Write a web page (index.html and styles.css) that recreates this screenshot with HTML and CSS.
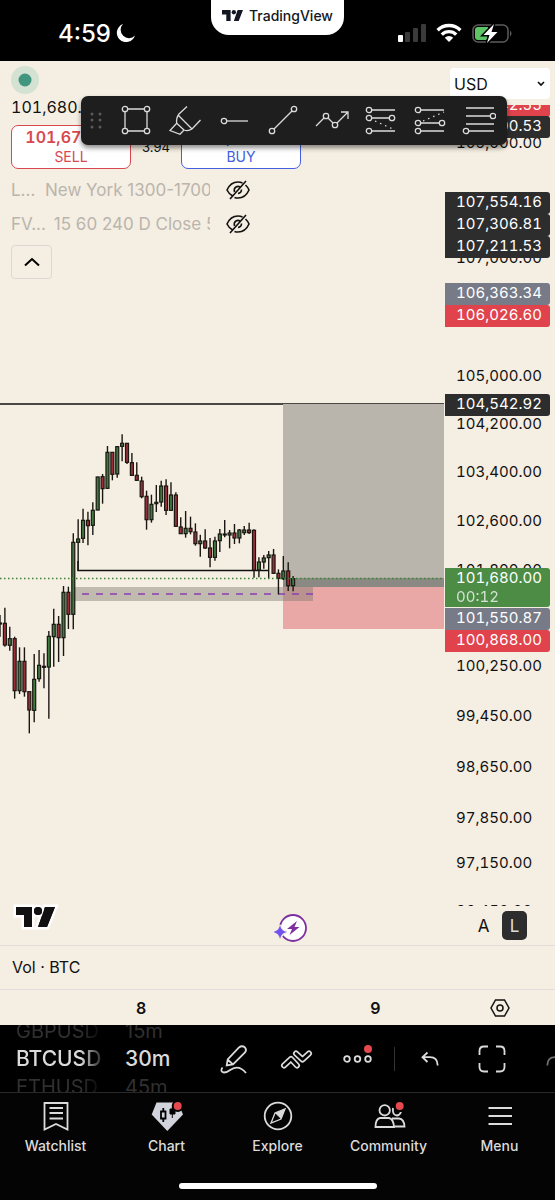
FILE: index.html
```html
<!DOCTYPE html>
<html lang="en">
  <head>
    <meta charset="UTF-8" />
    <meta name="viewport" content="width=device-width, initial-scale=1.0" />
    <title>BTCUSD - TradingView</title>
    <link rel="stylesheet" href="styles.css" />
  </head>
  <body>
    <header class="status">
      <div class="status-left">
        <span class="clock">4:59</span>
        <svg class="moon" width="20" height="20" viewBox="0 0 20 20"><path d="M7 1A9.3 9.3 0 1 0 19 12.6A8 8 0 0 1 7 1z" fill="#fff" /></svg>
      </div>
      <div class="notch">
        <svg width="21" height="11" viewBox="0 0 39 20"><path d="M0 0H16V20H8V8H0zM29 0H39L31 20H22z" fill="#131722" /><circle cx="22" cy="4" r="4" fill="#131722" /></svg>
        <span>TradingView</span>
      </div>
      <div class="status-right">
        <svg width="30" height="20" viewBox="0 0 30 20">
          <rect x="1" y="12" width="5" height="7" rx="1" fill="#fff" />
          <rect x="8" y="9" width="5" height="10" rx="1" fill="#3a3a3a" />
          <rect x="16" y="5" width="5" height="14" rx="1" fill="#3a3a3a" />
          <rect x="24" y="1" width="5" height="18" rx="1" fill="#3a3a3a" />
        </svg>
        <svg width="26" height="20" viewBox="0 0 26 20" fill="none" stroke="#fff" stroke-width="3.4">
          <path d="M1.6 7.2A16.2 16.2 0 0 1 24.4 7.2M5.8 11.6A10.2 10.2 0 0 1 20.2 11.6" />
          <path d="M13 19L8.8 14.8A6 6 0 0 1 17.2 14.8z" fill="#fff" stroke="none" />
        </svg>
        <svg width="42" height="22" viewBox="0 0 42 22">
          <rect x="2" y="3" width="35" height="17" rx="5" fill="none" stroke="#5c5c5c" stroke-width="1.5" />
          <path d="M39 8.5Q42 11.5 39 14.5z" fill="#5c5c5c" />
          <path d="M7 5H17V18H7Q4 18 4 15V8Q4 5 7 5z" fill="#5fc466" />
          <path d="M23 2L12.5 13H18.5L16 21L26.5 10H20.5z" fill="#fff" stroke="#000" stroke-width="3" paint-order="stroke" />
        </svg>
      </div>
    </header>

    <main class="chart">
      <section class="pane">
        <svg class="plot" id="plot" width="100%" height="100%">
          <line class="level" x1="0" y1="343" x2="100%" y2="343" />
          <rect x="283" y="343" width="100%" height="183" fill="#b9b5ac" />
          <rect x="283" y="517" width="100%" height="9" fill="#8b8983" />
          <rect x="283" y="526" width="100%" height="42" fill="#e9a8a6" />
          <rect x="74" y="526" width="239" height="14" fill="#807d74" fill-opacity="0.46" />
          <line x1="82" y1="533" x2="313" y2="533" stroke="#8a3fae" stroke-width="1.5" stroke-dasharray="7 7" />
          <path class="level" d="M78 500V509.5H268" fill="none" />
          <g id="candles"></g>
          <line x1="0" y1="517.5" x2="100%" y2="517.5" stroke="#3f8038" stroke-width="1.3" stroke-dasharray="1.5 2.5" />
        </svg>

        <div class="legend">
          <svg class="live" width="28" height="28" viewBox="0 0 28 28"><circle cx="14" cy="14" r="14" fill="#d3e2d2" /><circle cx="14" cy="14" r="6.5" fill="#42957f" /></svg>
          <div class="last">101,680.00</div>
          <div class="trade">
            <button type="button" class="order sell"><b>101,678.03</b><span>SELL</span></button>
            <span class="spread">3.94</span>
            <button type="button" class="order buy"><b>101,681.97</b><span>BUY</span></button>
          </div>
          <div class="study">
            <span class="study-name">L...</span>
            <span class="study-args">New York 1300-1700</span>
            <svg width="24" height="20" viewBox="0 0 24 20" fill="none" stroke="#111" stroke-width="1.6"><path d="M7 16.3Q3 14.2 1 10Q4.5 2 12 2Q14.5 2 16.5 3M19.5 5Q22 7.3 23 10Q19.5 18 12 18Q10 18 8.5 17.4M8.5 12Q7.5 8.5 10 7Q12 5.8 14 7M15.5 9.5Q15.5 13 12 13.5M20 1L4 19" /></svg>
          </div>
          <div class="study">
            <span class="study-name">FV...</span>
            <span class="study-args">15 60 240 D Close 5</span>
            <svg width="24" height="20" viewBox="0 0 24 20" fill="none" stroke="#111" stroke-width="1.6"><path d="M7 16.3Q3 14.2 1 10Q4.5 2 12 2Q14.5 2 16.5 3M19.5 5Q22 7.3 23 10Q19.5 18 12 18Q10 18 8.5 17.4M8.5 12Q7.5 8.5 10 7Q12 5.8 14 7M15.5 9.5Q15.5 13 12 13.5M20 1L4 19" /></svg>
          </div>
          <button type="button" class="collapse" aria-label="Collapse legend">
            <svg width="16" height="10" viewBox="0 0 16 10" fill="none" stroke="#000" stroke-width="2"><path d="M1 8.5L8 2L15 8.5" /></svg>
          </button>
        </div>

        <svg class="watermark" width="47" height="28" viewBox="-4 -4 47 28">
          <g fill="#111" stroke="#fff" stroke-width="5" paint-order="stroke"><path d="M0 0H16V20H8V8H0zM29 0H39L31 20H22z" /><circle cx="22" cy="4" r="4" /></g>
          <path d="M0 0H16V20H8V8H0zM29 0H39L31 20H22z" fill="#111" /><circle cx="22" cy="4" r="4" fill="#111" />
        </svg>
        <svg class="event" width="34" height="30" viewBox="0 0 34 30">
          <circle cx="19" cy="15" r="13" fill="#fff" stroke="#7d2f9f" stroke-width="1.8" />
          <path d="M23 8L13 16H18L15.5 22L25.5 14H20.5z" fill="#7d2f9f" />
          <path d="M6 12Q7 18 13 19Q7 20 6 26Q5 20 -1 19Q5 18 6 12z" fill="#6f52ef" stroke="#f5eee2" stroke-width="3" paint-order="stroke" />
        </svg>
      </section>

      <aside class="axis">
        <select class="currency" aria-label="Currency">
          <option>USD</option>
        </select>
        <div class="scale" id="scale"></div>
        <div class="modes">
          <button type="button" class="mode">A</button>
          <button type="button" class="mode mode-on">L</button>
        </div>
      </aside>

      <div class="drawbar">
        <svg class="grip" width="30" height="34" viewBox="0 0 30 34" fill="#5a5a5a">
          <circle cx="11" cy="10" r="1.5" /><circle cx="19" cy="10" r="1.5" />
          <circle cx="11" cy="16" r="1.5" /><circle cx="19" cy="16" r="1.5" />
          <circle cx="11" cy="23" r="1.5" /><circle cx="19" cy="23" r="1.5" />
        </svg>
        <button type="button" aria-label="Rectangle"><svg class="tool" viewBox="0 0 34 34"><path d="M9 5H25M9 27H25M6 8V24M28 8V24" /><circle cx="6" cy="5" r="2.7" /><circle cx="28" cy="5" r="2.7" /><circle cx="6" cy="27" r="2.7" /><circle cx="28" cy="27" r="2.7" /></svg></button>
        <button type="button" aria-label="Highlighter"><svg class="tool" viewBox="0 0 34 34"><path d="M19 2.5L11 10Q8 14 8.7 19.3L2 26.5L12 30.3L16 26Q20 27.5 24 25L32.5 16M10 11L24 25M8.7 19.3L16 26" /></svg></button>
        <button type="button" aria-label="Horizontal ray"><svg class="tool" viewBox="0 0 34 34"><path d="M10 17H31" /><circle cx="7" cy="17" r="2.7" /></svg></button>
        <button type="button" aria-label="Trend line"><svg class="tool" viewBox="0 0 34 34"><path d="M8 25L26 7" /><circle cx="6" cy="27" r="2.7" /><circle cx="28" cy="5" r="2.7" /></svg></button>
        <button type="button" aria-label="Path"><svg class="tool" viewBox="0 0 34 34"><path d="M1 22L9 14M13 14L18 19M22 19L33 8M26 8H33V15" /><circle cx="11" cy="12" r="2.7" /><circle cx="20" cy="21" r="2.7" /></svg></button>
        <button type="button" aria-label="Long position"><svg class="tool" viewBox="0 0 34 34"><path d="M8 6H31M8 14H25M8 27H31" /><path d="M11 17L31 26" stroke-dasharray="1.5 4" /><circle cx="5" cy="6" r="2.7" /><circle cx="5" cy="14" r="2.7" /><circle cx="28" cy="14" r="2.7" /><circle cx="5" cy="27" r="2.7" /></svg></button>
        <button type="button" aria-label="Short position"><svg class="tool" viewBox="0 0 34 34"><path d="M8 6H31M8 19H26M8 27H31" /><path d="M10 17L31 8" stroke-dasharray="1.5 4" /><circle cx="5" cy="6" r="2.7" /><circle cx="5" cy="19" r="2.7" /><circle cx="29" cy="19" r="2.7" /><circle cx="5" cy="27" r="2.7" /></svg></button>
        <button type="button" aria-label="Fib retracement"><svg class="tool" viewBox="0 0 34 34"><path d="M4 4H32M4 12H28M4 20H32M7 27H32" /><circle cx="31" cy="12" r="2.7" /><circle cx="4" cy="27" r="2.7" /></svg></button>
      </div>
    </main>

    <div class="volume">Vol · BTC</div>
    <div class="dates">
      <div class="days"><span>8</span><span>9</span></div>
      <button type="button" class="settings" aria-label="Chart settings">
        <svg width="20" height="20" viewBox="0 0 20 20" fill="none" stroke="#111" stroke-width="1.5"><path d="M5.5 2H14.5L19 10L14.5 18H5.5L1 10z" /><circle cx="10" cy="10" r="3" /></svg>
      </button>
    </div>

    <div class="toolbar">
      <div class="wheels">
        <div class="wheel symbol"><span>GBPUSD</span><strong>BTCUSD</strong><span>ETHUSD</span></div>
        <div class="wheel"><span>15m</span><strong>30m</strong><span>45m</span></div>
      </div>
      <button type="button" aria-label="Draw"><svg class="icon" viewBox="0 0 34 34"><path d="M9.7 23.3L10.7 17.3L22 5.5Q25 3 28 5.5Q30 8 28 10.5L16 22.3zM10.5 17.5L16 22.5M5.5 25.5Q2.5 29.5 7 30.5Q10 30.5 14 27.5Q22 22.5 29 31" /></svg></button>
      <button type="button" aria-label="Indicators"><svg class="icon zigzag" viewBox="0 0 34 34"><path d="M5 23.5L12 17L18 23.5M17 11.5L23.5 17.5L30 11.5" stroke="#dbdbdb" stroke-width="6" /><path d="M5 23.5L12 17L18 23.5M17 11.5L23.5 17.5L30 11.5" stroke="#000" stroke-width="2.6" /></svg></button>
      <button type="button" aria-label="More"><svg class="icon" viewBox="0 0 34 34"><circle cx="6" cy="17" r="2.8" /><circle cx="16.5" cy="17" r="2.8" /><circle cx="27" cy="17" r="2.8" /><circle class="dot" cx="27" cy="7" r="4" /></svg></button>
      <span class="divider"></span>
      <button type="button" aria-label="Undo"><svg class="icon" viewBox="0 0 34 34"><path d="M14.5 10.5L9.5 15.2L14.5 20M9.5 15.2H17Q24.5 15.2 24.7 23.5" /></svg></button>
      <button type="button" aria-label="Fullscreen"><svg class="icon" viewBox="0 0 34 34"><path d="M4.5 13V9Q4.5 4.5 9 4.5H13M21 4.5H25Q29.500 4.500 29.500 9V13M29.500 21V25Q29.500 29.500 25 29.500H21M13 29.500H9Q4.500 29.500 4.500 25V21" /></svg></button>
      <button type="button" class="faded" aria-label="Redo"><svg class="icon" viewBox="0 0 34 34"><path d="M19.5 10.5L24.5 15.2L19.5 20M24.5 15.2H18Q10.5 15.2 10.3 23.5" /></svg></button>
    </div>

    <nav class="tabs">
      <a href="#watchlist">
        <svg class="icon" viewBox="0 0 34 34"><path d="M5.5 4H28.5V30.5L17 25L5.5 30.5zM10.5 9H24M10.5 14H24M10.5 19.5H24" /></svg>
        Watchlist
      </a>
      <a href="#chart">
        <svg class="icon" viewBox="0 0 34 34"><path d="M6.5 3.5H28L33 15.5L17.3 32L1.7 15.5z" fill="#d1d4dc" stroke="none" /><path d="M13.3 9V12M13.3 20V23M11 12.5H15.5V19.5H11z" stroke="#000" /><path d="M22.3 8V19M20 10H25V15H20z" fill="#000" stroke="#000" stroke-width="1" /><circle class="dot ring" cx="27.7" cy="7" r="5" /></svg>
        Chart
      </a>
      <a href="#explore">
        <svg class="icon" viewBox="0 0 34 34"><circle cx="17" cy="17" r="13.3" /><path d="M24 10L20 20L10 24L14 14z" stroke-width="1.3" /><path d="M24 10L20 20L14 14z" fill="#dbdbdb" stroke="none" /></svg>
        Explore
      </a>
      <a href="#community">
        <svg class="icon" viewBox="0 0 34 34"><circle cx="12.7" cy="11.3" r="5.2" /><path d="M8 19H17Q21.5 20 22 28H3.5Q3.5 20 8 19zM21 9Q20 16 25 16.5Q28 16 29 13M20 19.5H27Q32 20 32.5 27.5H22" /><circle class="dot ring" cx="27.7" cy="7" r="5" /></svg>
        Community
      </a>
      <a href="#menu">
        <svg class="icon" viewBox="0 0 34 34"><path d="M5.5 9H29M5.5 17H29M5.5 25H29" /></svg>
        Menu
      </a>
    </nav>
    <div class="home"><span></span></div>

    <script src="script.js"></script>
  </body>
</html>
```

FILE: styles.css
```css
* {
  box-sizing: border-box;
}
body {
  margin: 0;
  min-height: 100vh;
  display: flex;
  flex-direction: column;
  overflow-x: hidden;
  background: #000;
  color: #111;
  font-family: "Inter", "Liberation Sans", sans-serif;
  font-size: 16px;
}
button {
  padding: 0;
  border: none;
  background: none;
  color: inherit;
  font: inherit;
  cursor: pointer;
}
svg {
  display: block;
  flex: none;
}

/* status bar */
.status {
  display: grid;
  grid-template-columns: 1fr auto 1fr;
  height: 61px;
  color: #fff;
}
.status-left,
.status-right {
  display: flex;
  align-items: center;
  padding-top: 5px;
}
.status-left {
  gap: 5px;
  padding-left: 58px;
}
.status-right {
  justify-content: flex-end;
  gap: 9px;
  padding-right: 42px;
}
.clock {
  font-size: 24px;
  font-weight: 500;
}
.notch {
  display: flex;
  align-items: center;
  justify-content: center;
  gap: 6px;
  width: 133px;
  height: 35px;
  padding-bottom: 4px;
  background: #fff;
  border-radius: 0 0 18px 18px;
  color: #131722;
  font-size: 14px;
  font-weight: 500;
}

/* chart */
.chart {
  position: relative;
  flex: 1;
  display: flex;
  min-height: 884px;
  background: #f5eee2;
}
.pane {
  position: relative;
  flex: 1;
  min-width: 0;
  overflow: hidden;
}
.plot {
  position: absolute;
  top: 0;
  left: 0;
}
.level {
  stroke: #111;
  stroke-width: 1.5;
}
.legend {
  position: absolute;
  top: 5px;
  left: 11px;
}
.last {
  margin-top: 3px;
  font-variant-numeric: tabular-nums;
  line-height: 20px;
}
.trade {
  display: flex;
  align-items: center;
  margin-top: 8px;
}
.order {
  display: flex;
  flex-direction: column;
  align-items: center;
  justify-content: center;
  width: 120px;
  height: 44px;
  background: #fff;
  border: 1px solid;
  border-radius: 7px;
  line-height: 19px;
}
.order b {
  font-variant-numeric: tabular-nums;
  font-weight: 600;
}
.order span {
  font-size: 14px;
}
.sell {
  color: #d9484f;
}
.buy {
  color: #4460e0;
}
.spread {
  width: 50px;
  font-size: 13px;
  text-align: center;
}
.study {
  display: flex;
  align-items: center;
  gap: 8px;
  width: 239px;
  height: 34px;
  color: #bab5ad;
  font-size: 17px;
}
.trade + .study {
  margin-top: 4px;
}
.study-name {
  min-width: 26px;
}
.study-args {
  flex: 1;
  min-width: 0;
  overflow: hidden;
  white-space: nowrap;
}
.study svg {
  margin-left: 8px;
}
.collapse {
  display: flex;
  align-items: center;
  justify-content: center;
  width: 41px;
  height: 34px;
  margin-top: 4px;
  border: 1px solid #dcd8d6;
  border-radius: 4px;
}
.watermark {
  position: absolute;
  bottom: 14px;
  left: 12px;
}
.event {
  position: absolute;
  bottom: 2px;
  left: 274px;
}

/* price axis */
.axis {
  display: flex;
  flex-direction: column;
  width: 111px;
  padding: 7px 5px 5px 1px;
}
.currency {
  height: 31px;
  margin-left: 5px;
  padding: 0 4px;
  appearance: none;
  background: #fff url("data:image/svg+xml,%3Csvg xmlns='http://www.w3.org/2000/svg' width='8' height='6' fill='none' stroke='%23111' stroke-width='1.7'%3E%3Cpath d='M1 1l3 3 3-3'/%3E%3C/svg%3E") right 5px center no-repeat;
  border: none;
  border-radius: 4px;
  color: #111;
  font: inherit;
}
.scale {
  position: relative;
  flex: 1;
  margin-top: 6px;
  overflow: hidden;
  font-size: 15px;
  font-variant-numeric: tabular-nums;
}
.price {
  position: absolute;
  left: 0;
  right: 0;
  padding: 0 0 2px 11px;
  line-height: 20px;
}
.tag {
  border-radius: 0 3px 3px 0;
  color: #fff;
}
.tag small {
  display: block;
  font-size: 15px;
  line-height: 17px;
  opacity: 0.75;
}
.dark {
  background: #2d2d2d;
}
.grey {
  background: #777a87;
}
.red {
  background: #e0434b;
}
.green {
  background: #4c8c45;
}
.modes {
  display: flex;
  gap: 6px;
  padding: 5px 0 0 26px;
}
.mode {
  width: 25px;
  height: 29px;
  border-radius: 5px;
  font-size: 17px;
}
.mode-on {
  background: #2d2d2d;
  color: #ddd;
}

/* floating drawing tools */
.drawbar {
  position: absolute;
  top: 35px;
  left: 81px;
  display: flex;
  align-items: center;
  height: 49px;
  padding-right: 4px;
  background: #1e1e1e;
  border-radius: 7px;
  box-shadow: 0 3px 5px rgba(0, 0, 0, 0.45);
}
.drawbar button {
  display: flex;
  justify-content: center;
  width: 49px;
}
.tool {
  width: 34px;
  height: 34px;
  fill: none;
  stroke: #dbdbdb;
  stroke-width: 1.3;
}

.volume {
  padding: 0 12px;
  background: #f5eee2;
  border-top: 1px solid #e2dcdc;
  line-height: 43px;
}
.dates {
  display: flex;
  align-items: center;
  height: 36px;
  background: #f5eee2;
  border-top: 1px solid #e2dcdc;
}
.days {
  flex: 1;
  display: flex;
  gap: 224px;
  padding-left: 136px;
  font-weight: 600;
}
.settings {
  display: flex;
  justify-content: center;
  width: 111px;
}

/* bottom toolbar */
.toolbar {
  display: flex;
  align-items: center;
  height: 68px;
  overflow: hidden;
  border-bottom: 1px solid #292929;
  color: #dbdbdb;
}
.toolbar button {
  flex: none;
  display: flex;
  justify-content: center;
  width: 62px;
}
.wheels {
  flex: none;
  display: flex;
  gap: 23px;
  width: 203px;
  padding-left: 16px;
}
.wheel {
  display: flex;
  flex-direction: column;
}
.wheel span {
  color: #303030;
  font-size: 20px;
  line-height: 28px;
}
.wheel strong {
  font-size: 21px;
  font-weight: 500;
  line-height: 28px;
}
.symbol {
  width: 86px;
  overflow: hidden;
  mask-image: linear-gradient(to right, #000 75%, transparent 105%);
}
.divider {
  flex: none;
  width: 10px;
  height: 24px;
  background: linear-gradient(#333, #333) center / 1px 100% no-repeat;
}
.icon {
  width: 34px;
  height: 34px;
  fill: none;
  stroke: #dbdbdb;
  stroke-width: 1.8;
}
.zigzag {
  stroke-linecap: round;
  stroke-linejoin: round;
}
.dot {
  fill: #e5484d;
  stroke: none;
}
.ring {
  stroke: #000;
  stroke-width: 2;
}
.faded {
  opacity: 0.5;
}

/* tab bar */
.tabs {
  display: flex;
  height: 71px;
  padding-top: 6px;
  background: #040404;
}
.tabs a {
  flex: 1;
  display: flex;
  flex-direction: column;
  align-items: center;
  gap: 3px;
  color: #dbdbdb;
  font-size: 14px;
  font-weight: 500;
  line-height: 20px;
  text-decoration: none;
}
.home {
  display: flex;
  justify-content: center;
  height: 36px;
  padding-top: 19px;
  background: #040404;
}
.home span {
  width: 198px;
  height: 6px;
  background: #fff;
  border-radius: 3px;
}
```

FILE: script.js
```js
const SVG = "http://www.w3.org/2000/svg";
const STEP = 4.885;
const TOP = 359;

// high, body top, body bottom, low (thirds of a pixel below TOP), up = 1
const candles = [
  [585, 609, 612, 650, 0], [563, 610, 675, 680, 0], [620, 656, 676, 692, 1],
  [650, 656, 812, 836, 0], [682, 724, 812, 822, 1], [682, 724, 815, 830, 0],
  [815, 815, 870, 940, 0], [702, 778, 871, 907, 1], [690, 736, 776, 785, 1],
  [700, 739, 742, 805, 0], [633, 649, 741, 896, 1], [566, 613, 650, 740, 1],
  [588, 613, 653, 726, 0], [498, 517, 653, 708, 1], [500, 517, 583, 627, 0],
  [340, 367, 583, 628, 1], [298, 357, 367, 452, 1], [266, 301, 355, 369, 1],
  [275, 301, 317, 376, 0], [247, 271, 316, 345, 1], [170, 171, 270, 271, 1],
  [162, 170, 206, 251, 0], [78, 97, 205, 207, 1], [97, 97, 163, 181, 0],
  [78, 80, 162, 173, 1], [43, 70, 79, 124, 1], [70, 70, 127, 132, 0],
  [99, 128, 166, 168, 0], [127, 166, 181, 183, 0], [170, 183, 230, 235, 0],
  [212, 229, 299, 329, 0], [224, 253, 299, 308, 1], [195, 247, 251, 276, 1],
  [182, 198, 246, 260, 1], [178, 198, 271, 285, 0], [187, 225, 271, 272, 1],
  [217, 225, 319, 320, 0], [292, 321, 341, 342, 0], [273, 325, 341, 353, 1],
  [290, 325, 335, 343, 0], [310, 336, 371, 377, 0], [344, 363, 371, 410, 1],
  [328, 363, 384, 387, 0], [354, 384, 412, 442, 0], [350, 363, 412, 422, 1],
  [327, 342, 362, 396, 1], [300, 342, 345, 352, 0], [330, 339, 345, 385, 1],
  [312, 339, 354, 372, 0], [327, 330, 354, 370, 1], [318, 330, 338, 345, 1],
  [308, 330, 338, 342, 0], [328, 331, 450, 473, 0], [412, 426, 450, 472, 1],
  [405, 414, 426, 446, 1], [393, 405, 413, 475, 1], [387, 405, 460, 462, 0],
  [448, 460, 475, 523, 0], [408, 453, 476, 480, 1], [427, 453, 497, 513, 0],
  [468, 476, 497, 514, 1],
];

// text, centre on the scale, tag colour, countdown
const prices = [
  ["109,000.00", 38], ["107,000.00", 153], ["105,000.00", 271],
  ["104,200.00", 319], ["103,400.00", 367], ["102,600.00", 416],
  ["101,800.00", 465], ["100,250.00", 561], ["99,450.00", 611],
  ["98,650.00", 662], ["97,850.00", 713], ["97,150.00", 758],
  ["96,450.00", 806],
  ["110,042.55", 0, "red"], ["109,300.53", 21, "dark"],
  ["107,554.16", 97, "dark"], ["107,306.81", 119, "dark"],
  ["107,211.53", 141, "dark"], ["106,363.34", 188, "grey"],
  ["106,026.60", 210, "red"], ["104,542.92", 299, "dark"],
  ["101,680.00", 473, "green", "00:12"],
  ["101,550.87", 513, "grey"], ["100,868.00", 535, "red"],
];

function drawCandle([high, top, bottom, low, up], i) {
  const x = i * STEP;
  const wick = document.createElementNS(SVG, "path");
  wick.setAttribute("d", `M${x} ${TOP + high / 3}V${TOP + low / 3}`);
  wick.setAttribute("stroke", "#1a1712");
  wick.setAttribute("stroke-width", 1.4);

  const body = document.createElementNS(SVG, "rect");
  body.setAttribute("x", x - 1.5);
  body.setAttribute("y", TOP + top / 3);
  body.setAttribute("width", 3);
  body.setAttribute("height", Math.max((bottom - top) / 3, 1));
  body.setAttribute("fill", up ? "#3f7a3f" : "#98303a");
  body.setAttribute("stroke", "#1a1712");
  body.setAttribute("stroke-width", 1.2);

  document.getElementById("candles").append(wick, body);
}

function drawPrice([text, y, color, countdown]) {
  const label = document.createElement("div");
  label.className = color ? "price tag " + color : "price";
  label.style.top = y - 10 + "px";
  label.textContent = text;
  if (countdown) {
    const small = document.createElement("small");
    small.textContent = countdown;
    label.appendChild(small);
  }
  document.getElementById("scale").appendChild(label);
}

candles.forEach(drawCandle);
prices.forEach(drawPrice);
```
